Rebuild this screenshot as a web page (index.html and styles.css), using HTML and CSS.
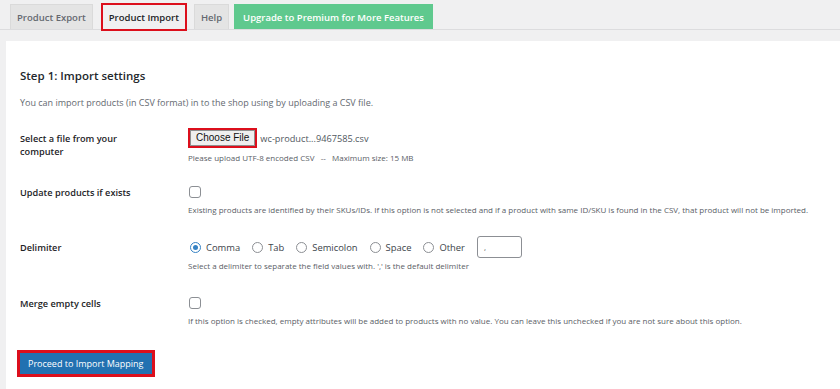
FILE: index.html
```html
<!DOCTYPE html>
<html lang="en">
<head>
  <meta charset="UTF-8">
  <title>Product Import</title>
  <meta name="viewport" content="width=device-width, initial-scale=1.0">
  <link rel="stylesheet" href="styles.css">
</head>
<body>
  <nav class="tabs">
    <a class="tab" href="#">Product Export</a>
    <a class="tab tab-active" href="#">Product Import</a>
    <a class="tab" href="#">Help</a>
    <a class="tab tab-premium" href="#">Upgrade to Premium for More Features</a>
  </nav>

  <div class="panel">
    <h2>Step 1: Import settings</h2>
    <p class="intro">You can import products (in CSV format) in to the shop using by uploading a CSV file.</p>

    <div class="row row-file">
      <div class="label">Select a file from your computer</div>
      <div class="field">
        <div class="file-line">
          <span class="pick"><span class="pick-btn">Choose File</span></span>
          <span class="file-name">wc-product...9467585.csv</span>
        </div>
        <p class="hint">Please upload UTF-8 encoded CSV &nbsp;&nbsp;-- &nbsp;&nbsp;Maximum size: 15 MB</p>
      </div>
    </div>

    <div class="row row-update">
      <div class="label">Update products if exists</div>
      <div class="field">
        <span class="check"></span>
        <p class="hint">Existing products are identified by their SKUs/IDs. If this option is not selected and if a product with same ID/SKU is found in the CSV, that product will not be imported.</p>
      </div>
    </div>

    <div class="row row-delim">
      <div class="label">Delimiter</div>
      <div class="field">
        <div class="radios">
          <label class="radio-item"><span class="radio radio-on"></span>Comma</label>
          <label class="radio-item"><span class="radio"></span>Tab</label>
          <label class="radio-item"><span class="radio"></span>Semicolon</label>
          <label class="radio-item"><span class="radio"></span>Space</label>
          <label class="radio-item"><span class="radio"></span>Other</label>
          <span class="other-box">,</span>
        </div>
        <p class="hint">Select a delimiter to separate the field values with. ',' is the default delimiter</p>
      </div>
    </div>

    <div class="row row-merge">
      <div class="label">Merge empty cells</div>
      <div class="field">
        <span class="check"></span>
        <p class="hint">If this option is checked, empty attributes will be added to products with no value. You can leave this unchecked if you are not sure about this option.</p>
      </div>
    </div>

    <div class="submit">
      <span class="submit-btn">Proceed to Import Mapping</span>
    </div>
  </div>
</body>
</html>
```

FILE: styles.css
```css
body {
  margin: 0;
  background: #f0f0f1;
  font-family: "Open Sans", "Noto Sans", sans-serif;
  color: #1d2327;
}
.tabs {
  display: flex;
  align-items: flex-end;
  gap: 5px;
  padding: 4px 0 0 10px;
  height: 25px;
  border-bottom: 1px solid #dcdcde;
}
.tab {
  display: flex;
  align-items: center;
  height: 24px;
  padding: 0 6px;
  background: #e4e4e4;
  border: 1px solid #dadada;
  border-bottom: none;
  color: #646970;
  font-size: 9.5px;
  font-weight: 600;
  text-decoration: none;
}
.tab-active {
  background: #f0f0f1;
  color: #1d2327;
  border: 2px solid #dc0f1c;
  height: 24px;
  margin: 0 2px -2px 3px;
}
.tab-premium {
  background: #5fc98e;
  border-color: #5fc98e;
  color: #fff;
  padding: 0 8px;
}
.panel {
  margin: 11px 0 0 6px;
  background: #fff;
  padding: 27px 14px 14px;
  min-height: 320px;
}
h2 {
  margin: 0;
  font-size: 11.5px;
  font-weight: 600;
  line-height: 16px;
  color: #23282d;
}
.intro {
  margin: 13px 0 0;
  font-size: 9px;
  line-height: 12px;
  color: #646970;
}
.row {
  display: grid;
  grid-template-columns: 168px 1fr;
  margin-top: 23px;
}
.row-file {
  margin-top: 19px;
}
.row-delim {
  margin-top: 21px;
}
.row-merge {
  margin-top: 26px;
}
.label {
  width: 125px;
  padding-top: 4px;
  font-size: 9.2px;
  font-weight: 600;
  line-height: 13px;
  color: #1d2327;
}
.row-update .label,
.row-merge .label {
  padding-top: 0;
}
.row-delim .label {
  padding-top: 5px;
}
.field {
  display: flex;
  flex-direction: column;
  align-items: flex-start;
}
.file-line {
  display: flex;
  align-items: center;
}
.pick {
  display: inline-flex;
  border: 2px solid #dc0f1c;
}
.pick-btn {
  display: block;
  padding: 1px 5px;
  background: #efefef;
  border: 1px solid #8f8f8f;
  font-family: "Liberation Sans", Arial, sans-serif;
  font-size: 10px;
  line-height: 12px;
  color: #111;
}
.file-name {
  margin-left: 3px;
  font-size: 9.2px;
  color: #50575e;
}
.hint {
  margin: 4px 0 0;
  font-size: 8px;
  line-height: 11px;
  color: #5a6066;
  white-space: nowrap;
}
.check {
  display: block;
  width: 10px;
  height: 10px;
  margin-left: 1px;
  border: 1px solid #8c8f94;
  border-radius: 3px;
  background: #fff;
}
.row-update .hint,
.row-merge .hint {
  margin-top: 6px;
}
.radios {
  display: flex;
  align-items: center;
  gap: 10px;
  font-size: 9.4px;
  color: #3c434a;
}
.radio-item {
  display: flex;
  align-items: center;
  gap: 5px;
}
.radio {
  display: inline-block;
  width: 9px;
  height: 9px;
  margin-left: 2px;
  border: 1px solid #8c8f94;
  border-radius: 50%;
  background: #fff;
  position: relative;
}
.radio-on {
  border-color: #3582c4;
}
.radio-on::after {
  content: "";
  position: absolute;
  left: 2px;
  top: 2px;
  width: 5px;
  height: 5px;
  border-radius: 50%;
  background: #3582c4;
}
.other-box {
  display: block;
  width: 37px;
  height: 20px;
  padding-left: 6px;
  margin-left: 2px;
  border: 1px solid #8c8f94;
  border-radius: 3px;
  font-size: 8px;
  line-height: 20px;
  color: #50575e;
}
.row-delim .hint {
  margin-top: 2px;
}
.submit {
  margin-top: 24px;
  margin-left: -3px;
}
.submit-btn {
  display: inline-block;
  padding: 4px 8px;
  background: #2271b1;
  border: 3px solid #dc0f1c;
  color: #fff;
  font-size: 9px;
  line-height: 13px;
}
```
